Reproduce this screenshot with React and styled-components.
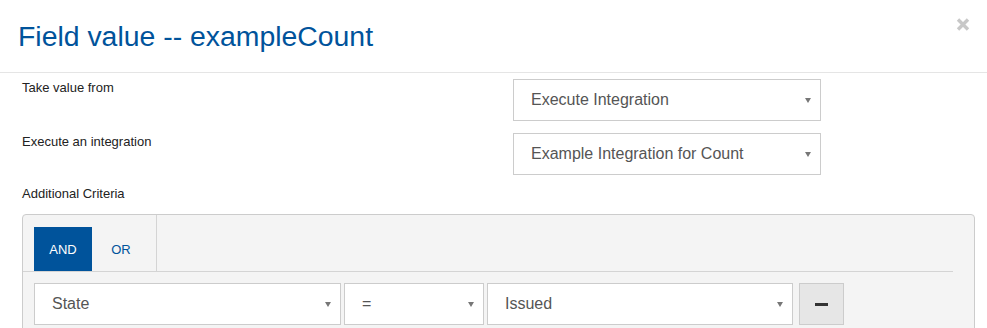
import React from "react";
import styled, { createGlobalStyle } from "styled-components";

const Global = createGlobalStyle`
  html, body { margin: 0; padding: 0; overflow: hidden; background: #fff; }
  body { font-family: "Liberation Sans", Arial, sans-serif; }
  * { box-sizing: border-box; }
`;

const Header = styled.div`
  display: flex;
  justify-content: space-between;
  align-items: flex-start;
  padding: 15px 17px 15px 18px;
  border-bottom: 1px solid #e5e5e5;
`;

const Title = styled.h4`
  margin: 0;
  font-size: 28.4px;
  line-height: 42px;
  font-weight: normal;
  color: #00539b;
`;

const Close = styled.button`
  margin-top: 3px;
  padding: 0;
  border: 0;
  background: none;
  width: 14px;
  height: 13px;
  display: flex;
  cursor: pointer;
`;

const Body = styled.div`
  padding-top: 6px;
`;

const FieldRow = styled.div`
  display: grid;
  grid-template-columns: 491px 308px;
  padding-left: 22px;
  margin-bottom: 12px;
  align-items: start;
`;

const Label = styled.label`
  display: block;
  font-size: 13px;
  line-height: 18px;
  color: #222;
`;

const SectionLabel = styled(Label)`
  padding-left: 22px;
  margin-top: -2px;
`;

const Select = styled.div`
  display: flex;
  align-items: center;
  justify-content: space-between;
  width: ${(p) => p.$w}px;
  height: 42px;
  padding: 0 9px 1px 17px;
  border: 1px solid #ccc;
  background: #fff;
  font-size: 16px;
  color: #555;
  flex: none;
`;

const Caret = () => (
  <svg width="6" height="5" viewBox="0 0 6 5" style={{ marginTop: 2 }}>
    <path d="M0 0H6L3 5Z" fill="#777" />
  </svg>
);

const Panel = styled.div`
  margin: 11px 12px 0 22px;
  border: 1px solid #ccc;
  border-radius: 4px;
  background: #f4f4f4;
  height: 200px;
`;

const TabHeader = styled.div`
  display: flex;
  margin-right: 21px;
  border-bottom: 1px solid #d4d4d4;
`;

const TabGroup = styled.div`
  display: flex;
  padding: 12px 6px 0 11px;
  border-right: 1px solid #d4d4d4;
`;

const Tab = styled.button`
  width: 58px;
  height: 44px;
  border: 0;
  padding: 0;
  font-family: inherit;
  font-size: 13px;
  background: ${(p) => (p.$active ? "#00539b" : "transparent")};
  color: ${(p) => (p.$active ? "#fff" : "#00539b")};
  cursor: pointer;
`;

const CriteriaRow = styled.div`
  display: flex;
  gap: 3px;
  padding: 11px 0 0 11px;
`;

const MinusButton = styled.button`
  margin-left: 3px;
  width: 45px;
  height: 42px;
  border: 1px solid #ccc;
  background: #e6e6e6;
  display: flex;
  align-items: center;
  justify-content: center;
  padding: 0;
  flex: none;
`;

const MinusBar = styled.span`
  display: block;
  width: 13px;
  height: 3px;
  background: #333;
  margin-top: 1px;
`;

export default function App() {
  return (
    <>
      <Global />
      <Header>
        <Title>Field value -- exampleCount</Title>
        <Close aria-label="Close">
          <svg width="14" height="13" viewBox="0 0 14 13">
            <path d="M2 1.5L12 11.5M12 1.5L2 11.5" stroke="#c8c8c8" strokeWidth="3.4" strokeLinecap="butt" />
          </svg>
        </Close>
      </Header>
      <Body>
        <FieldRow>
          <Label>Take value from</Label>
          <Select $w={308}>
            <span>Execute Integration</span>
            <Caret />
          </Select>
        </FieldRow>
        <FieldRow>
          <Label>Execute an integration</Label>
          <Select $w={308}>
            <span>Example Integration for Count</span>
            <Caret />
          </Select>
        </FieldRow>
        <SectionLabel>Additional Criteria</SectionLabel>
        <Panel>
          <TabHeader>
            <TabGroup>
              <Tab $active>AND</Tab>
              <Tab>OR</Tab>
            </TabGroup>
          </TabHeader>
          <CriteriaRow>
            <Select $w={307}>
              <span>State</span>
              <Caret />
            </Select>
            <Select $w={140}>
              <span>=</span>
              <Caret />
            </Select>
            <Select $w={306}>
              <span>Issued</span>
              <Caret />
            </Select>
            <MinusButton aria-label="Remove">
              <MinusBar />
            </MinusButton>
          </CriteriaRow>
        </Panel>
      </Body>
    </>
  );
}
